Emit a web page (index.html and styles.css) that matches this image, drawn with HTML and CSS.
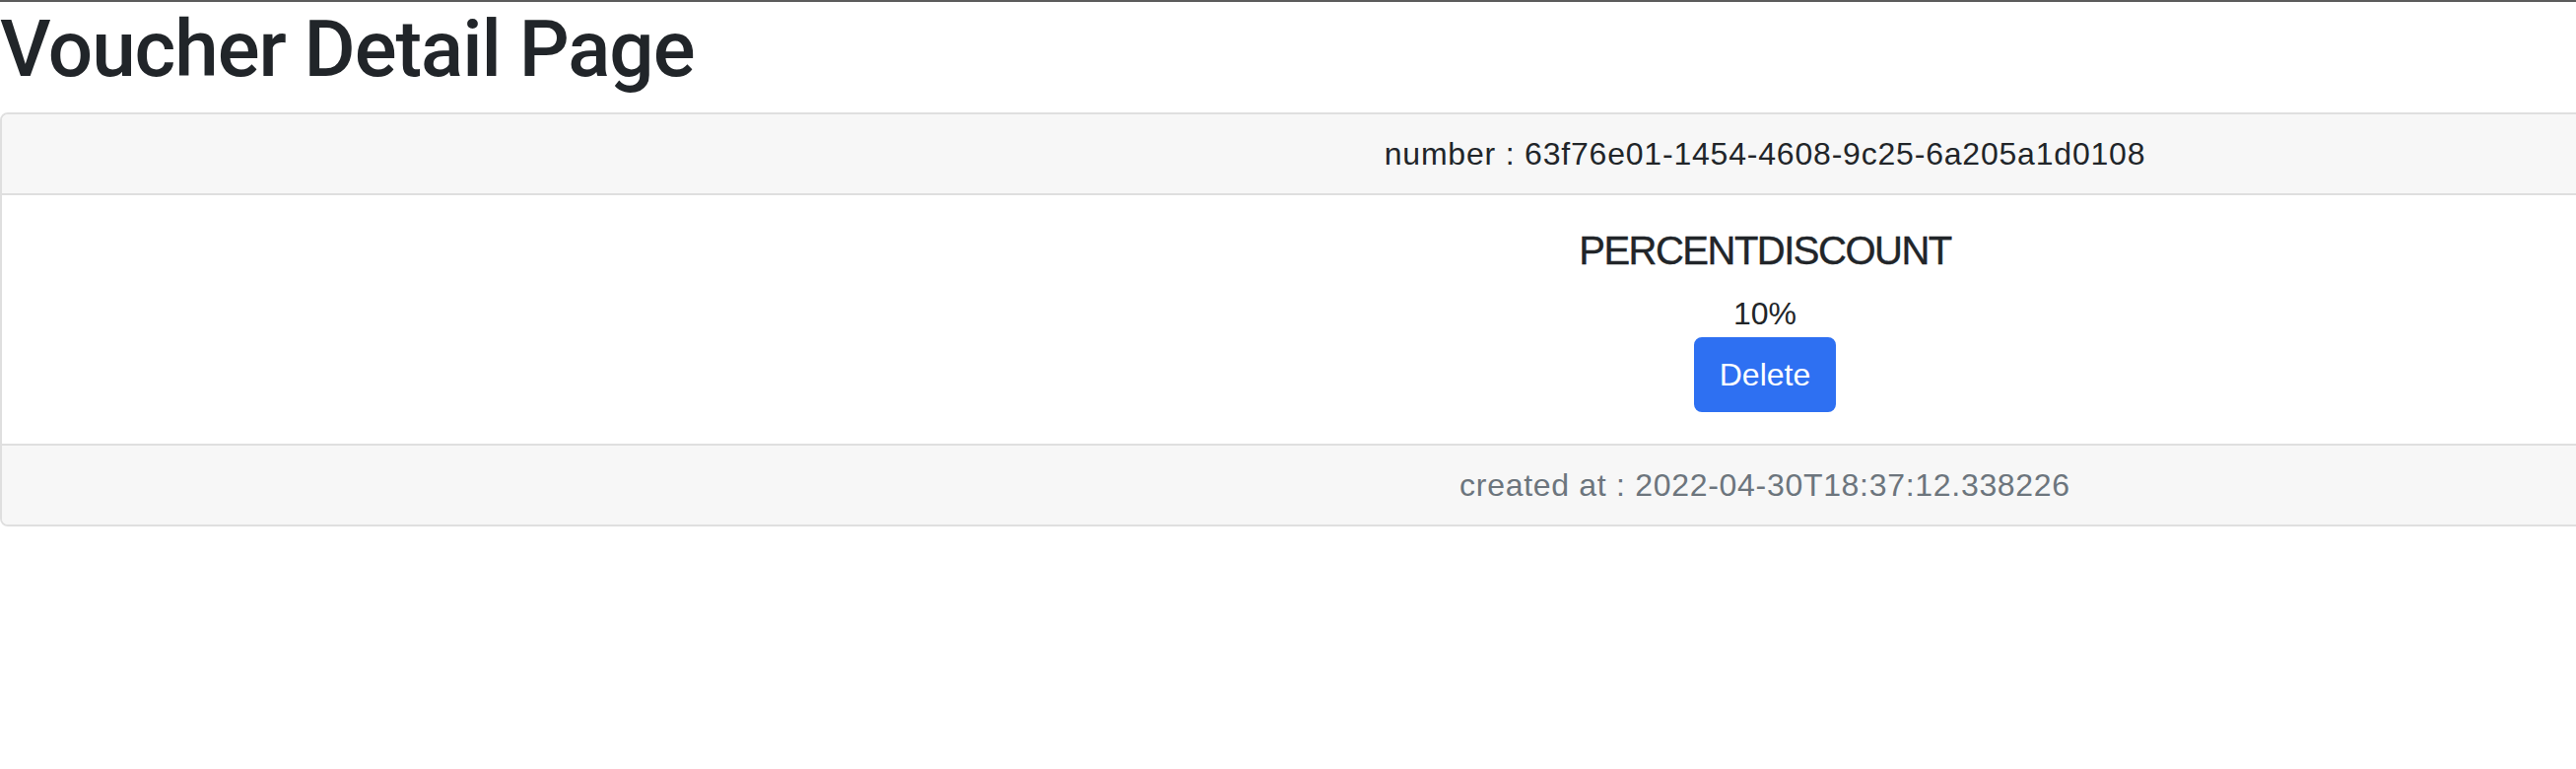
FILE: index.html
```html
<!DOCTYPE html>
<html lang="en">
<head>
<meta charset="utf-8">
<title>Voucher Detail Page</title>
<link rel="stylesheet" href="styles.css">
</head>
<body>
<div class="topline"></div>
<div class="page">
  <h1 class="title">Voucher Detail Page</h1>
  <div class="card">
    <div class="card-header">number : 63f76e01-1454-4608-9c25-6a205a1d0108</div>
    <div class="card-body">
      <h5 class="card-title">PERCENTDISCOUNT</h5>
      <div class="card-text">10%</div>
      <button class="btn btn-primary" type="button">Delete</button>
    </div>
    <div class="card-footer">created at : 2022-04-30T18:37:12.338226</div>
  </div>
</div>
</body>
</html>
```
FILE: styles.css
```css
html, body {
  margin: 0;
  padding: 0;
  background: #fff;
  overflow: hidden;
}
body {
  font-family: "Liberation Sans", Arial, sans-serif;
  font-size: 32px;
  line-height: 1.5;
  color: #212529;
}
.topline {
  height: 2px;
  background: #5c5c5c;
}
.page {
  width: 3582px;
}
.title {
  margin: 0 0 16px 0;
  font-family: Roboto, "Liberation Sans", sans-serif;
  font-size: 80px;
  font-weight: 500;
  line-height: 1.2;
  letter-spacing: -1.05px;
  color: #212529;
}
.card {
  border: 2px solid #dfdfdf;
  border-radius: 8px;
  background: #fff;
  text-align: center;
  overflow: hidden;
}
.card-header {
  background: #f7f7f7;
  border-bottom: 2px solid #dfdfdf;
  padding: 16px 32px;
  line-height: 48px;
  letter-spacing: 0.8px;
}
.card-body {
  padding: 32px;
  display: flex;
  flex-direction: column;
  align-items: center;
}
.card-title {
  margin: 0 0 16px 0;
  font-size: 40px;
  font-weight: 400;
  line-height: 48px;
  letter-spacing: -1.5px;
  -webkit-text-stroke: 0.4px #212529;
}
.card-text {
  line-height: 48px;
}
.btn {
  font-family: inherit;
  font-size: 32px;
  line-height: 48px;
  padding: 12px 24px;
  border: 2px solid #2e70f2;
  border-radius: 8px;
  background: #2e70f2;
  color: #fff;
  cursor: pointer;
}
.card-footer {
  background: #f7f7f7;
  border-top: 2px solid #dfdfdf;
  padding: 16px 32px;
  line-height: 48px;
  color: #6c757d;
  letter-spacing: 0.7px;
}
```
